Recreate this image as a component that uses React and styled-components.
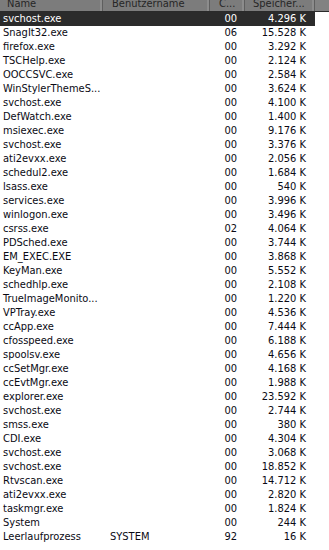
import React from "react";
import styled, { createGlobalStyle } from "styled-components";

const Global = createGlobalStyle`
  html, body { margin: 0; padding: 0; background: #ffffff; }
  body { font-family: "DejaVu Sans Condensed", "Liberation Sans", Arial, sans-serif; font-size: 11px; }
`;

const COLS = "103px 107px 35px 70px";

const Frame = styled.div`
  width: 329px;
  height: 550px;
  overflow: hidden;
  background: #ffffff;
`;

const Header = styled.div`
  display: grid;
  grid-template-columns: ${COLS} 1fr;
  height: 11px;
  background: #7c7c7c;
  border-bottom: 1px solid #2a2a2a;
  overflow: hidden;
`;

const HeadCell = styled.div`
  position: relative;
  padding-left: ${(p) => p.$pl}px;
  color: #262626;
  line-height: 11px;
  margin-top: -2px;
  white-space: nowrap;
  overflow: hidden;
  border-right: 1px solid #5e5e5e;
  box-shadow: inset -2px 0 0 #8c8c8c;
  &:last-child { border-right: none; box-shadow: none; background: #828282; }
`;

const Body = styled.div`
  display: flex;
  flex-direction: column;
`;

const Row = styled.div`
  display: grid;
  grid-template-columns: ${COLS};
  width: 315px;
  height: 14px;
  line-height: 14px;
  background: ${(p) => (p.$sel ? "#2b2b2b" : "transparent")};
  color: ${(p) => (p.$sel ? "#ffffff" : "#0a0a14")};
`;

const Cell = styled.div`
  white-space: nowrap;
  overflow: hidden;
  text-align: ${(p) => p.$align || "left"};
  padding-left: ${(p) => p.$pl || 0}px;
  padding-right: ${(p) => p.$pr || 0}px;
`;

const data = [
  ["svchost.exe", "", "00", "4.296 K"],
  ["SnagIt32.exe", "", "06", "15.528 K"],
  ["firefox.exe", "", "00", "3.292 K"],
  ["TSCHelp.exe", "", "00", "2.124 K"],
  ["OOCCSVC.exe", "", "00", "2.584 K"],
  ["WinStylerThemeS...", "", "00", "3.624 K"],
  ["svchost.exe", "", "00", "4.100 K"],
  ["DefWatch.exe", "", "00", "1.400 K"],
  ["msiexec.exe", "", "00", "9.176 K"],
  ["svchost.exe", "", "00", "3.376 K"],
  ["ati2evxx.exe", "", "00", "2.056 K"],
  ["schedul2.exe", "", "00", "1.684 K"],
  ["lsass.exe", "", "00", "540 K"],
  ["services.exe", "", "00", "3.996 K"],
  ["winlogon.exe", "", "00", "3.496 K"],
  ["csrss.exe", "", "02", "4.064 K"],
  ["PDSched.exe", "", "00", "3.744 K"],
  ["EM_EXEC.EXE", "", "00", "3.868 K"],
  ["KeyMan.exe", "", "00", "5.552 K"],
  ["schedhlp.exe", "", "00", "2.108 K"],
  ["TrueImageMonito...", "", "00", "1.220 K"],
  ["VPTray.exe", "", "00", "4.536 K"],
  ["ccApp.exe", "", "00", "7.444 K"],
  ["cfosspeed.exe", "", "00", "6.188 K"],
  ["spoolsv.exe", "", "00", "4.656 K"],
  ["ccSetMgr.exe", "", "00", "4.168 K"],
  ["ccEvtMgr.exe", "", "00", "1.988 K"],
  ["explorer.exe", "", "00", "23.592 K"],
  ["svchost.exe", "", "00", "2.744 K"],
  ["smss.exe", "", "00", "380 K"],
  ["CDI.exe", "", "00", "4.304 K"],
  ["svchost.exe", "", "00", "3.068 K"],
  ["svchost.exe", "", "00", "18.852 K"],
  ["Rtvscan.exe", "", "00", "14.712 K"],
  ["ati2evxx.exe", "", "00", "2.820 K"],
  ["taskmgr.exe", "", "00", "1.824 K"],
  ["System", "", "00", "244 K"],
  ["Leerlaufprozess", "SYSTEM", "92", "16 K"],
];

export default function App() {
  return (
    <Frame>
      <Global />
      <Header>
        <HeadCell $pl={7}>Name</HeadCell>
        <HeadCell $pl={9}>Benutzername</HeadCell>
        <HeadCell $pl={9}>C...</HeadCell>
        <HeadCell $pl={8}>Speicher...</HeadCell>
        <HeadCell $pl={0}></HeadCell>
      </Header>
      <Body>
        {data.map((r, i) => (
          <Row key={i} $sel={i === 0}>
            <Cell $pl={3}>{r[0]}</Cell>
            <Cell $pl={7}>{r[1]}</Cell>
            <Cell $align="right" $pr={8}>{r[2]}</Cell>
            <Cell $align="right" $pr={9}>{r[3]}</Cell>
          </Row>
        ))}
      </Body>
    </Frame>
  );
}
